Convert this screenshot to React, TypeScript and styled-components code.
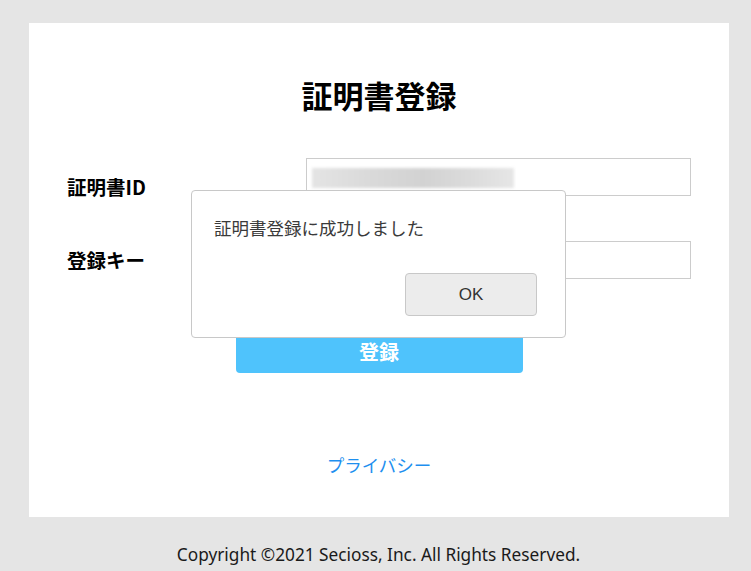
import styled, { createGlobalStyle } from "styled-components";

const GlobalStyle = createGlobalStyle`
  html, body {
    margin: 0;
    padding: 0;
    background: #e5e5e5;
  }
  body {
    font-family: "Noto Sans", "Noto Sans CJK JP", sans-serif;
    color: #111;
  }
`;

const Page = styled.div`
  width: 751px;
  height: 571px;
  padding-top: 23px;
  box-sizing: border-box;
  overflow: hidden;
`;

const Card = styled.main`
  position: relative;
  margin: 0 22px 0 29px;
  height: 494px;
  background: #fff;
  padding-top: 52px;
  box-sizing: border-box;
  display: flex;
  flex-direction: column;
  align-items: center;
`;

const Title = styled.h1`
  margin: 0;
  font-family: "Noto Sans CJK JP", sans-serif;
  font-size: 31px;
  font-weight: 700;
  line-height: 40px;
  color: #000;
`;

const Form = styled.div`
  margin-top: 43px;
  width: 100%;
  padding: 0 38px;
  box-sizing: border-box;
  display: grid;
  grid-template-columns: 239px 1fr;
  row-gap: 45px;
`;

const Label = styled.div<{ $offset?: number }>`
  font-family: "Noto Sans CJK JP", sans-serif;
  font-size: 19.5px;
  font-weight: 700;
  color: #000;
  display: flex;
  align-items: center;
  transform: translateY(${({ $offset }) => $offset ?? 0}px);
`;

const InputBox = styled.div`
  height: 38px;
  border: 1px solid #cccccc;
  box-sizing: border-box;
  padding: 9px 5px;
  background: #fff;
`;

const Blurred = styled.div`
  width: 202px;
  height: 20px;
  background: linear-gradient(90deg, #e4e4e4 0%, #d9d9d9 30%, #d2d2d2 55%, #dcdcdc 80%, #e6e6e6 100%);
  filter: blur(1.5px);
`;

const SubmitButton = styled.button`
  margin-top: 54px;
  width: 287px;
  height: 40px;
  border: none;
  border-radius: 4px;
  background: #4fc3fc;
  color: #fff;
  font-family: "Noto Sans CJK JP", sans-serif;
  font-size: 20px;
  font-weight: 700;
  line-height: 1;
  padding: 0 0 2px;
`;

const PrivacyLink = styled.a`
  margin-top: 80px;
  font-family: "Noto Sans CJK JP", sans-serif;
  font-size: 17.5px;
  line-height: 24px;
  color: #1e8fef;
  text-decoration: none;
`;

const Footer = styled.footer`
  text-align: center;
  padding: 26px 0 0 6px;
  font-family: "Noto Sans", sans-serif;
  font-size: 17.25px;
  line-height: 24px;
  color: #1a1a1a;
`;

const Dialog = styled.div`
  position: absolute;
  left: 162px;
  top: 167px;
  width: 375px;
  height: 148px;
  box-sizing: border-box;
  background: #fff;
  border: 1px solid #c8c8c8;
  border-radius: 4px;
  padding: 25px 28px 21px 22px;
  display: flex;
  flex-direction: column;
  justify-content: space-between;
`;

const Message = styled.p`
  margin: 0;
  font-family: "Noto Sans CJK JP", sans-serif;
  font-size: 17.5px;
  line-height: 24px;
  color: #3a3a3a;
`;

const Actions = styled.div`
  display: flex;
  justify-content: flex-end;
`;

const OkButton = styled.button`
  width: 132px;
  height: 43px;
  border: 1px solid #c8c8c8;
  border-radius: 4px;
  background: #ececec;
  font-family: "Liberation Sans", Arial, sans-serif;
  font-size: 17px;
  color: #333;
`;

const App = () => (
  <Page>
    <GlobalStyle />
    <Card>
      <Title>証明書登録</Title>
      <Form>
        <Label $offset={9}>証明書ID</Label>
        <InputBox>
          <Blurred />
        </InputBox>
        <Label $offset={-1}>登録キー</Label>
        <InputBox />
      </Form>
      <SubmitButton>登録</SubmitButton>
      <PrivacyLink href="#">プライバシー</PrivacyLink>
      <Dialog>
        <Message>証明書登録に成功しました</Message>
        <Actions>
          <OkButton>OK</OkButton>
        </Actions>
      </Dialog>
    </Card>
    <Footer>Copyright ©2021 Secioss, Inc. All Rights Reserved.</Footer>
  </Page>
);

export default App;
